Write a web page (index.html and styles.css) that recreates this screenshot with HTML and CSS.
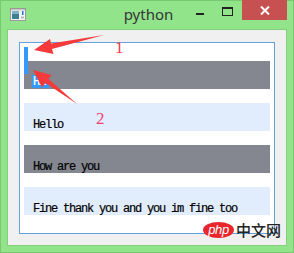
FILE: index.html
```html
<!DOCTYPE html>
<html lang="en">
<head>
  <meta charset="utf-8">
  <title>python</title>
  <link rel="stylesheet" href="styles.css">
</head>
<body>
  <div class="window">
    <div class="titlebar">
      <div class="app-icon">
        <svg width="16" height="13" viewBox="0 0 16 13">
          <rect x="0.5" y="0.5" width="15" height="12" fill="#f4f4f4" stroke="#9a9a9a"/>
          <rect x="1" y="1" width="14" height="1.5" fill="#c8c8c8"/>
          <rect x="2" y="3" width="7" height="8" fill="#3f7f92"/>
          <rect x="2" y="3" width="7" height="3" fill="#7fb3bf"/>
          <rect x="12" y="3" width="1.5" height="4" fill="#2a6fd6"/>
          <rect x="11" y="8.5" width="3" height="2" fill="#b8b8b8"/>
        </svg>
      </div>
      <div class="title">python</div>
      <div class="controls">
        <span class="btn-min"></span>
        <span class="btn-max"></span>
        <span class="btn-close">
          <svg width="10" height="9" viewBox="0 0 10 9">
            <path d="M1 0.5 L9 8.5 M9 0.5 L1 8.5" stroke="#fff" stroke-width="2"/>
          </svg>
        </span>
      </div>
    </div>

    <div class="client">
      <div class="list">
        <div class="item dark editing">
          <span class="caret"></span>
          <div class="text"><span class="sel">Hi</span></div>
        </div>
        <div class="item light">
          <div class="text">Hello</div>
        </div>
        <div class="item dark">
          <div class="text">How are you</div>
        </div>
        <div class="item light">
          <div class="text">Fine thank you and you im fine too</div>
        </div>
      </div>
    </div>

    <svg class="notes" width="294" height="253" viewBox="0 0 294 253">
      <polygon points="34,50 50,39 51,43.5 104,35 52,49 53.5,54" fill="#f43a3a"/>
      <polygon points="33,70 51.5,75 48.5,79 77,104 45.5,83 42,87.5" fill="#f43a3a"/>
      <text x="115" y="53" class="num one">1</text>
      <text x="96" y="124" class="num two">2</text>
    </svg>

    <div class="watermark">
      <span class="php">php</span>
      <span class="cn">中文网</span>
    </div>
  </div>
</body>
</html>
```

FILE: styles.css
```css
body {
  margin: 0;
  width: 294px;
  height: 253px;
  overflow: hidden;
}
.window {
  position: relative;
  width: 294px;
  height: 253px;
  box-sizing: border-box;
  padding: 0 8px 8px 8px;
  background: #91e48a;
  box-shadow: inset 0 0 0 1px #79c872;
}
.titlebar {
  height: 30px;
  display: grid;
  grid-template-columns: 1fr auto 1fr;
  margin: 0 -1px 0 2px;
}
.app-icon {
  padding-top: 8px;
}
.app-icon svg {
  display: block;
}
.title {
  font-family: "Noto Sans", sans-serif;
  font-size: 15px;
  line-height: 30px;
  color: #363636;
  margin-top: -1px;
}
.controls {
  display: flex;
  justify-content: flex-end;
  align-items: flex-start;
}
.btn-min {
  width: 8px;
  height: 2px;
  margin: 13px 18px 0 0;
  background: #222;
}
.btn-max {
  width: 9px;
  height: 6px;
  margin: 7px 9px 0 0;
  border: 1px solid #222;
  border-top-width: 2px;
}
.btn-close {
  width: 45px;
  height: 20px;
  background: #c75050;
  display: flex;
  align-items: center;
  justify-content: center;
}
.btn-close svg {
  display: block;
  margin-top: 1px;
}
.client {
  height: 215px;
  background: #f0f0f0;
  box-shadow: 0 0 0 1px #84cf7d;
  padding: 12px 0 0 11px;
  box-sizing: border-box;
}
.list {
  width: 256px;
  height: 192px;
  box-sizing: border-box;
  border: 1px solid #64a0dc;
  background: #fff;
  padding: 18px 4px 0 4px;
  display: flex;
  flex-direction: column;
  gap: 14px;
}
.item {
  position: relative;
  height: 28px;
  flex: none;
  overflow: hidden;
  padding-left: 9px;
}
.item.dark {
  background: #848790;
}
.item.light {
  background: #e1edfd;
}
.item.editing {
  overflow: visible;
}
.text {
  font-family: "Liberation Mono", monospace;
  font-size: 12px;
  letter-spacing: -1.2px;
  line-height: 12px;
  padding-top: 16px;
  color: #000;
  white-space: nowrap;
  -webkit-text-stroke: 0.2px #000;
}
.editing .text {
  padding-top: 14px;
  margin-left: -1px;
}
.sel {
  display: inline-block;
  vertical-align: top;
  width: 17px;
  height: 13px;
  padding: 1px 0 0 1px;
  box-sizing: border-box;
  background: #3399ff;
  color: #fff;
  -webkit-text-stroke: 0.2px #fff;
}
.caret {
  position: absolute;
  left: 0;
  top: -14px;
  width: 4px;
  height: 27px;
  background: #3399ff;
}
.notes {
  position: absolute;
  left: 0;
  top: 0;
  pointer-events: none;
}
.num {
  font-family: "Liberation Serif", serif;
  font-size: 17px;
}
.one {
  fill: #f23a4a;
}
.two {
  fill: #f2406e;
}
.watermark {
  position: absolute;
  left: 203px;
  top: 222px;
  display: flex;
  align-items: center;
  gap: 2px;
}
.php {
  width: 31px;
  height: 16px;
  border-radius: 50%;
  background: #e8262c;
  color: #fff;
  font-family: "Liberation Sans", sans-serif;
  font-style: italic;
  font-size: 13px;
  line-height: 15px;
  text-align: center;
  letter-spacing: -0.4px;
}
.cn {
  font-family: "Noto Sans CJK SC", sans-serif;
  font-size: 15px;
  line-height: 16px;
  font-weight: 500;
  color: #222;
}
```
